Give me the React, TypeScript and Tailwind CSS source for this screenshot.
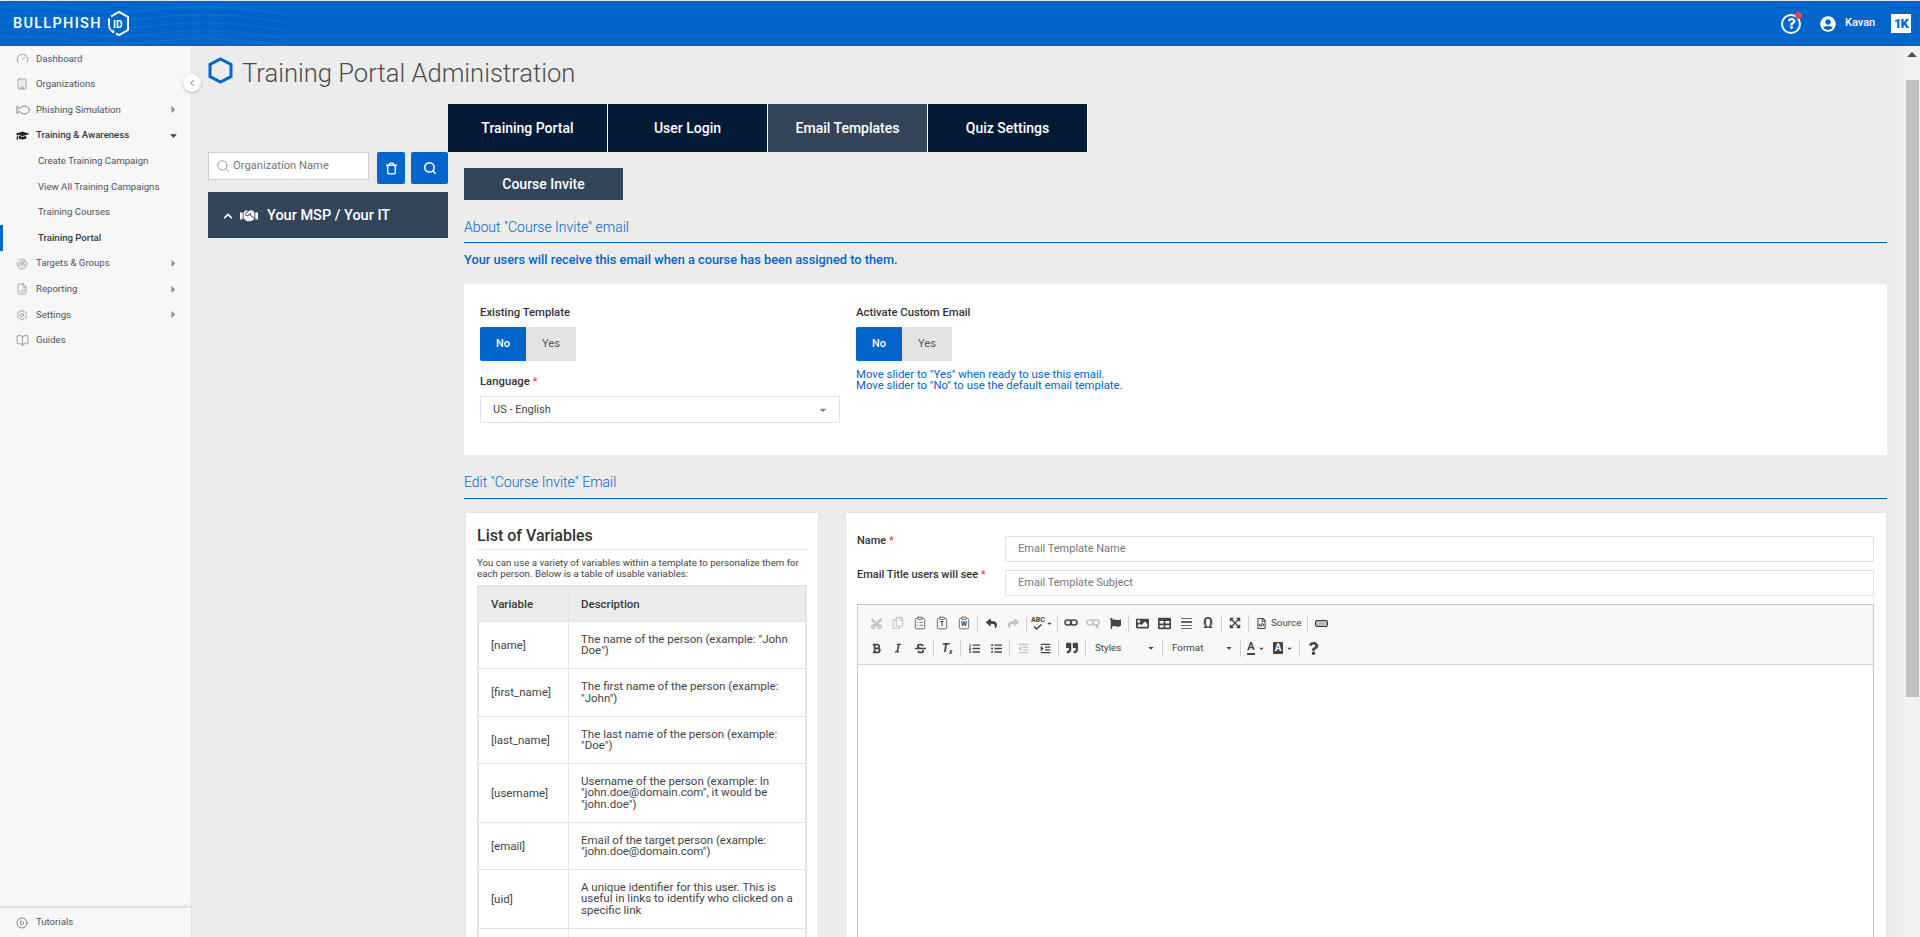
import React from 'react';
import {
  Building,
  BookOpen,
  ChevronLeft,
  CirclePlay,
  Clipboard,
  ClipboardList,
  FileBarChart,
  Gauge,
  Radar,
  Search,
  Settings,
  Trash,
} from 'lucide-react';
import {
  FaBold,
  FaCaretDown,
  FaCaretRight,
  FaChevronUp,
  FaCut,
  FaExpandArrowsAlt,
  FaFlag,
  FaGraduationCap,
  FaHandshake,
  FaImage,
  FaIndent,
  FaItalic,
  FaListOl,
  FaListUl,
  FaOutdent,
  FaQuestion,
  FaQuoteRight,
  FaRegCopy,
  FaRegFileCode,
  FaReply,
  FaShare,
  FaStrikethrough,
  FaTable,
  FaUserCircle,
} from 'react-icons/fa';

const navItems = [
  { label: 'Dashboard', icon: <Gauge size={13} strokeWidth={1.2} /> },
  { label: 'Organizations', icon: <Building size={12} strokeWidth={1.2} /> },
  { label: 'Phishing Simulation', icon: <FishIcon />, arrow: true },
  { label: 'Training & Awareness', icon: <FaGraduationCap size={13} />, open: true },
];

const subItems = ['Create Training Campaign', 'View All Training Campaigns', 'Training Courses', 'Training Portal'];

const navItemsBottom = [
  { label: 'Targets & Groups', icon: <Radar size={12} strokeWidth={1.2} />, arrow: true },
  { label: 'Reporting', icon: <FileBarChart size={12} strokeWidth={1.2} />, arrow: true },
  { label: 'Settings', icon: <Settings size={12} strokeWidth={1.2} />, arrow: true },
  { label: 'Guides', icon: <BookOpen size={13} strokeWidth={1.2} /> },
];

const variables = [
  { name: '[name]', desc: 'The name of the person (example: "John Doe")', h: 'h-[47px]' },
  { name: '[first_name]', desc: 'The first name of the person (example: "John")', h: 'h-[48px]' },
  { name: '[last_name]', desc: 'The last name of the person (example: "Doe")', h: 'h-[47px]' },
  { name: '[username]', desc: 'Username of the person (example: In "john.doe@domain.com", it would be "john.doe")', h: 'h-[59px]' },
  { name: '[email]', desc: 'Email of the target person (example: "john.doe@domain.com")', h: 'h-[47px]' },
  { name: '[uid]', desc: 'A unique identifier for this user. This is useful in links to identify who clicked on a specific link', h: 'h-[59px]' },
  { name: '', desc: '', h: 'h-[47px]' },
];

function FishIcon() {
  return (
    <svg width="14" height="10" viewBox="0 0 14 10" fill="none" stroke="currentColor" strokeWidth="0.9">
      <path d="M1 1.5v7l2.5-2.2C5 8 7 9 9 9c2 0 3.7-1.8 4.5-4C12.7 2.800 11 1 9 1 7 1 5 2 3.500 3.700Z" />
    </svg>
  );
}

function HexLogo() {
  return (
    <svg width="24" height="27" viewBox="0 0 24 27" fill="none">
      <path d="M4 6.500 12 2l9 5v13l-9 5-3-1.700" stroke="white" strokeWidth="2" />
      <path d="M2 15V8.500" stroke="white" strokeWidth="2" />
      <circle cx="6" cy="21.500" r="1.500" fill="white" />
      <path d="M2 15c0 3 1 5 3 6" stroke="white" strokeWidth="1.500" />
      <text x="6" y="17.500" fill="white" fontSize="10" fontWeight="700" fontFamily="Roboto, sans-serif">ID</text>
    </svg>
  );
}

function HeaderWaves() {
  return (
    <svg className="absolute left-0 top-0" width="290" height="46" viewBox="0 0 290 46" fill="none" stroke="#ffffff" strokeOpacity="0.07">
      <path d="M0 6c50-8 90 10 140 4s90-6 150 4" />
      <path d="M0 14c50-8 90 10 140 4s90-6 150 4" />
      <path d="M0 22c50-8 90 10 140 4s90-6 150 4" />
      <path d="M0 30c50-8 90 10 140 4s90-6 150 4" />
      <path d="M0 38c50-8 90 10 140 4s90-6 150 4" />
    </svg>
  );
}

function ChainIcon({ broken }: { broken?: boolean }) {
  return (
    <svg width="14" height="12" viewBox="0 0 14 12" fill="none" stroke="currentColor" strokeWidth="1.500">
      <rect x="1" y="3" width="6.500" height="5" rx="2.500" />
      <rect x="6.500" y="3" width="6.500" height="5" rx="2.500" />
      {broken && <path d="m9.500 8 3 3m0-3-3 3" strokeWidth="1.200" />}
    </svg>
  );
}

function Header() {
  return (
    <header className="relative flex h-[46px] items-center justify-between border-t border-[#dfe6ee] bg-[#0066cc] text-white">
      <HeaderWaves />
      <div className="relative ml-[13px] flex items-center gap-[5px]">
        <span className="text-[14.500px] font-medium tracking-[1.300px]">BULLPHISH</span>
        <HexLogo />
      </div>
      <div className="relative mr-[9px] flex items-center">
        <div className="relative mr-[19px] flex h-[20px] w-[20px] items-center justify-center rounded-full border-2 border-white">
          <FaQuestion size={11} />
          <span className="absolute -right-[3px] -top-[4px] h-[7px] w-[7px] rounded-full bg-[#e0484f]" />
        </div>
        <FaUserCircle size={16} />
        <span className="ml-[9px] mr-[16px] w-[30px] text-[11px] font-medium">Kavan</span>
        <div className="flex h-[19px] w-[20px] items-center justify-center bg-white text-[13px] font-black tracking-[-1px] text-[#0066cc]">
          1K
        </div>
      </div>
    </header>
  );
}

function NavRow({ label, icon, arrow, open }: { label: string; icon: React.ReactNode; arrow?: boolean; open?: boolean }) {
  return (
    <div className={`flex h-[25.6px] items-center pl-4 pr-[12px] text-[9.600px] ${open ? 'font-medium text-[#2f3a48]' : 'text-[#4c5560]'}`}>
      <span className={`flex w-[20px] shrink-0 items-center ${open ? 'text-[#222]' : 'text-[#6b7480]'}`}>{icon}</span>
      <span className="flex-1">{label}</span>
      {arrow && <FaCaretRight size={11} className="text-[#8b919a]" />}
      {open && <FaCaretDown size={11} className="text-[#444]" />}
    </div>
  );
}

function Sidebar() {
  return (
    <aside className="relative flex w-[192px] shrink-0 flex-col border-r border-[#e6e6e6] bg-[#f7f7f7]">
      <div className="flex-1">
        {navItems.map((item) => (
          <NavRow key={item.label} {...item} />
        ))}
        {subItems.map((label) => {
          const active = label === 'Training Portal';
          return (
            <div
              key={label}
              className={`flex h-[25.6px] items-center border-l-[3px] pl-[35px] text-[9.600px] ${
                active ? 'border-[#0066cc] font-medium text-[#2f3a48]' : 'border-transparent text-[#4c5560]'
              }`}
            >
              {label}
            </div>
          );
        })}
        {navItemsBottom.map((item) => (
          <NavRow key={item.label} {...item} />
        ))}
      </div>
      <div className="flex h-[31px] items-center border-t-2 border-[#e3e3e3] pl-4 text-[9.600px] text-[#4c5560] shadow-[0_-1px_3px_rgba(0,0,0,0.06)]">
        <span className="flex w-[20px] items-center text-[#555]">
          <CirclePlay size={12} strokeWidth={1.4} />
        </span>
        Tutorials
      </div>
      <button className="absolute -right-[10px] top-[28px] flex h-[18px] w-[18px] items-center justify-center rounded-full bg-white text-[#555] shadow-[0_1px_3px_rgba(0,0,0,0.25)]">
        <ChevronLeft size={10} />
      </button>
    </aside>
  );
}

function Toggle() {
  return (
    <div className="flex h-[34px] w-[96px] text-[11px]">
      <div className="flex w-[46px] items-center justify-center rounded-l-[2px] bg-[#0066cc] font-medium text-white">No</div>
      <div className="flex w-[50px] items-center justify-center rounded-r-[2px] bg-[#e4e4e4] text-[#555]">Yes</div>
    </div>
  );
}

function SectionHeading({ children, className }: { children: React.ReactNode; className: string }) {
  return (
    <div className={`flex items-end border-b border-[#0066cc] text-[14px] font-light leading-[18px] text-[#0066cc] ${className}`}>
      {children}
    </div>
  );
}

function Sep() {
  return <span className="mx-[2px] h-[17px] w-px bg-[#cfcfcf]" />;
}

function Tool({ children, muted, w = 'w-[22px]' }: { children: React.ReactNode; muted?: boolean; w?: string }) {
  return <span className={`flex h-[20px] items-center justify-center ${w} ${muted ? 'text-[#c4c4c4]' : 'text-[#444]'}`}>{children}</span>;
}

function PasteVariant({ mark }: { mark: string }) {
  return (
    <span className="relative flex text-[#666]">
      <Clipboard size={14} strokeWidth={1.6} />
      <span className="absolute bottom-[2px] left-0 right-0 text-center text-[7px] font-bold leading-[7px] text-[#444]">{mark}</span>
    </span>
  );
}

function Combo({ label, w }: { label: string; w: string }) {
  return (
    <span className={`flex h-[20px] items-center justify-between pl-[7px] pr-[5px] text-[9.800px] text-[#444] ${w}`}>
      {label}
      <FaCaretDown size={8} />
    </span>
  );
}

function EditorToolbar() {
  return (
    <div className="h-[60px] border-b border-[#d1d1d1] bg-[#f8f8f8] pl-[7px] pt-[8px]">
      <div className="flex h-[20px] items-center">
        <Tool muted><FaCut size={13} className="-rotate-90" /></Tool>
        <Tool muted><FaRegCopy size={12} /></Tool>
        <Tool><span className="flex text-[#666]"><ClipboardList size={14} strokeWidth={1.6} /></span></Tool>
        <Tool><PasteVariant mark="T" /></Tool>
        <Tool><PasteVariant mark="W" /></Tool>
        <Sep />
        <Tool><FaReply size={11} /></Tool>
        <Tool muted><FaShare size={11} /></Tool>
        <Sep />
        <Tool w="w-[26px]">
          <span className="flex items-center">
            <span className="flex flex-col items-center">
              <span className="text-[7px] font-bold leading-[7px]">ABC</span>
              <svg width="11" height="6" viewBox="0 0 11 6" fill="none" stroke="currentColor" strokeWidth="1.500">
                <path d="m2 2.500 2.500 2.500L9.500 0.500" />
              </svg>
            </span>
            <FaCaretDown size={7} className="ml-[1px]" />
          </span>
        </Tool>
        <Sep />
        <Tool><ChainIcon /></Tool>
        <Tool muted><ChainIcon broken /></Tool>
        <Tool><FaFlag size={11} /></Tool>
        <Sep />
        <Tool><FaImage size={13} /></Tool>
        <Tool><FaTable size={13} /></Tool>
        <Tool>
          <span className="flex flex-col gap-[2px]">
            <span className="h-px w-[11px] bg-[#666]" />
            <span className="h-[2px] w-[11px] bg-[#666]" />
            <span className="h-px w-[11px] bg-[#666]" />
            <span className="h-px w-[11px] bg-[#666]" />
          </span>
        </Tool>
        <Tool><span className="text-[15px] font-medium">Ω</span></Tool>
        <Sep />
        <Tool><FaExpandArrowsAlt size={12} /></Tool>
        <Sep />
        <Tool w="w-[20px]"><FaRegFileCode size={11} /></Tool>
        <span className="mr-[4px] w-[30px] text-[9.800px] text-[#444]">Source</span>
        <Sep />
        <Tool>
          <span className="h-[7px] w-[13px] rounded-[2px] border border-[#333] bg-[#bbb]" />
        </Tool>
      </div>
      <div className="mt-[5px] flex h-[20px] items-center">
        <Tool><FaBold size={11} /></Tool>
        <Tool><FaItalic size={10} /></Tool>
        <Tool><FaStrikethrough size={11} /></Tool>
        <Sep />
        <Tool><span className="text-[12px] font-bold italic">T<sub className="text-[7px]">x</sub></span></Tool>
        <Sep />
        <Tool><FaListOl size={11} /></Tool>
        <Tool><FaListUl size={11} /></Tool>
        <Sep />
        <Tool muted><FaOutdent size={11} /></Tool>
        <Tool><FaIndent size={11} /></Tool>
        <Sep />
        <Tool><FaQuoteRight size={12} /></Tool>
        <Sep />
        <Combo label="Styles" w="w-[72px]" />
        <Sep />
        <Combo label="Format" w="w-[73px]" />
        <Sep />
        <Tool w="w-[26px]">
          <span className="flex items-center">
            <span className="border-b-2 border-[#444] text-[11px] font-bold leading-[12px]">A</span>
            <FaCaretDown size={7} className="ml-[3px]" />
          </span>
        </Tool>
        <Tool w="w-[28px]">
          <span className="flex items-center">
            <span className="rounded-[1px] bg-[#444] px-[2px] text-[10px] font-bold leading-[12px] text-white">A</span>
            <FaCaretDown size={7} className="ml-[3px]" />
          </span>
        </Tool>
        <Sep />
        <Tool><FaQuestion size={13} /></Tool>
      </div>
    </div>
  );
}

function VariablesCard() {
  return (
    <div className="ml-px h-full w-[354px] shrink-0 border border-[#e6e6e6] bg-white pl-[11px] pr-[11px] pt-[13px]">
      <h2 className="border-b border-[#e8e8e8] pb-[3px] text-[16px] font-medium leading-[20px] text-[#333]">List of Variables</h2>
      <p className="mt-[8px] text-[9.700px] leading-[10.500px] text-[#444]">
        You can use a variety of variables within a template to personalize them for each person. Below is a table of usable variables:
      </p>
      <div className="mt-[6px] border-x-2 border-t-2 border-[#e4e4e4] text-[11.500px] leading-[11.500px] text-[#444]">
        <div className="flex h-[35px] items-center border-b border-[#e4e4e4] bg-[#ececec] pt-px font-medium text-[#3a3a3a]">
          <div className="flex h-full w-[90px] items-center border-r border-[#e4e4e4] pl-[12px]">Variable</div>
          <div className="pl-[12px]">Description</div>
        </div>
        {variables.map((row, i) => (
          <div key={i} className={`flex items-stretch border-b border-[#e4e4e4] ${row.h}`}>
            <div className="flex w-[90px] shrink-0 items-center border-r border-[#e4e4e4] pl-[12px] pt-px">{row.name}</div>
            <div className="flex flex-1 items-center pl-[12px] pr-[8px]">{row.desc}</div>
          </div>
        ))}
      </div>
    </div>
  );
}

function EmailFormCard() {
  return (
    <div className="flex h-full flex-1 flex-col border border-[#e6e6e6] bg-white pl-[11px] pr-[12px] pt-[23px]">
      <div className="flex h-[26px] items-start">
        <label className="w-[148px] text-[11px] font-medium leading-[10px] text-[#333]">
          Name <span className="text-[#d9534f]">*</span>
        </label>
        <div className="flex h-full flex-1 items-center border border-[#e2e2e2] pl-[12px] text-[11px] text-[#777]">Email Template Name</div>
      </div>
      <div className="mt-[8px] flex h-[26px] items-start">
        <label className="w-[148px] text-[11px] font-medium leading-[10px] text-[#333]">
          Email Title users will see <span className="text-[#d9534f]">*</span>
        </label>
        <div className="flex h-full flex-1 items-center border border-[#e2e2e2] pl-[12px] text-[11px] text-[#777]">Email Template Subject</div>
      </div>
      <div className="mt-[8px] flex-1 border border-[#c8c8c8]">
        <EditorToolbar />
      </div>
    </div>
  );
}

function FakeScrollbar() {
  return (
    <div className="flex w-[17px] shrink-0 flex-col items-center bg-[#f1f1f1]">
      <div className="mt-[6px] h-0 w-0 border-x-[5px] border-b-[5px] border-x-transparent border-b-[#505050]" />
      <div className="ml-[1px] mt-[23px] h-[617px] w-[13px] bg-[#c1c1c1]" />
    </div>
  );
}

export default function App() {
  return (
    <div className="flex h-[937px] w-[1920px] flex-col overflow-hidden bg-[#ececec] font-['Roboto',sans-serif]">
      <Header />
      <div className="flex min-h-0 flex-1">
        <Sidebar />
        <main className="min-w-0 flex-1 overflow-hidden pl-[16px] pr-[16px]">
          <div className="flex h-[58px] items-start gap-[9px] pt-[11px]">
            <svg width="25" height="27" viewBox="0 0 25 27" fill="none" stroke="#0066cc" strokeWidth="3">
              <path d="M12.500 2 23 7.500v12L12.500 25 2 19.500v-12Z" />
            </svg>
            <h1 className="text-[25.600px] font-light leading-[32px] text-[#4d4d4d]">Training Portal Administration</h1>
          </div>
          <div className="flex">
            <div className="w-[240px] shrink-0 pt-[48px]">
              <div className="flex items-start">
                <div className="flex h-[28px] w-[161px] items-center border border-[#cfcfcf] bg-white pl-[7px] text-[11.200px] text-[#777]">
                  <Search size={14} strokeWidth={1.1} className="mr-[3px] text-[#666]" />
                  Organization Name
                </div>
                <button className="ml-[8px] flex h-[32px] w-[28px] items-center justify-center rounded-[2px] bg-[#0066cc] text-white">
                  <Trash size={13} strokeWidth={2.6} />
                </button>
                <button className="ml-[6px] flex h-[32px] w-[37px] items-center justify-center rounded-[2px] bg-[#0066cc] text-white">
                  <Search size={14} strokeWidth={2.6} />
                </button>
              </div>
              <div className="mt-[8px] flex h-[46px] items-center bg-[#344459] pl-[15px] pt-[1px] text-[14.500px] font-medium text-white">
                <FaChevronUp size={10} />
                <FaHandshake size={18} className="ml-[7px] mr-[9px]" />
                Your MSP / Your IT
              </div>
            </div>
            <div className="min-w-0 flex-1">
              <nav className="flex h-[48px]">
                {['Training Portal', 'User Login', 'Email Templates', 'Quiz Settings'].map((tab) => (
                  <div
                    key={tab}
                    className={`flex w-[160px] items-center justify-center border-r border-white text-[14px] font-medium text-white ${
                      tab === 'Email Templates' ? 'bg-[#344459]' : 'bg-[#041b37]'
                    }`}
                  >
                    {tab}
                  </div>
                ))}
              </nav>
              <div className="pl-[16px]">
                <div className="mt-[16px] flex h-[32px] w-[159px] items-center justify-center bg-[#344459] text-[14px] font-medium text-white">
                  Course Invite
                </div>
                <SectionHeading className="h-[43px] pb-[6px]">About "Course Invite" email</SectionHeading>
                <p className="mt-[9px] text-[12.800px] font-medium leading-[16px] text-[#0066cc]">
                  Your users will receive this email when a course has been assigned to them.
                </p>
                <section className="mt-[16px] flex h-[171px] gap-[16px] bg-white pl-[16px] pt-[22px]">
                  <div className="w-[360px]">
                    <div className="text-[11.300px] font-medium leading-[14px] text-[#333]">Existing Template</div>
                    <div className="mt-[7px]"><Toggle /></div>
                    <div className="mt-[14px] text-[11.300px] font-medium leading-[14px] text-[#333]">
                      Language <span className="text-[#d9534f]">*</span>
                    </div>
                    <div className="mt-[7px] flex h-[27px] items-center justify-between border border-[#e2e2e2] pl-[12px] pr-[11px] pt-[1px] text-[11px] text-[#444]">
                      US - English
                      <FaCaretDown size={10} className="text-[#888]" />
                    </div>
                  </div>
                  <div>
                    <div className="text-[11.300px] font-medium leading-[14px] text-[#333]">Activate Custom Email</div>
                    <div className="mt-[7px]"><Toggle /></div>
                    <p className="mt-[8px] text-[11.350px] leading-[11px] text-[#0066cc]">
                      Move slider to "Yes" when ready to use this email.
                      <br />
                      Move slider to "No" to use the default email template.
                    </p>
                  </div>
                </section>
                <SectionHeading className="h-[44px] pb-[7px]">Edit "Course Invite" Email</SectionHeading>
                <div className="mt-[13px] flex h-[600px] gap-[26px]">
                  <VariablesCard />
                  <EmailFormCard />
                </div>
              </div>
            </div>
          </div>
        </main>
        <FakeScrollbar />
      </div>
    </div>
  );
}
